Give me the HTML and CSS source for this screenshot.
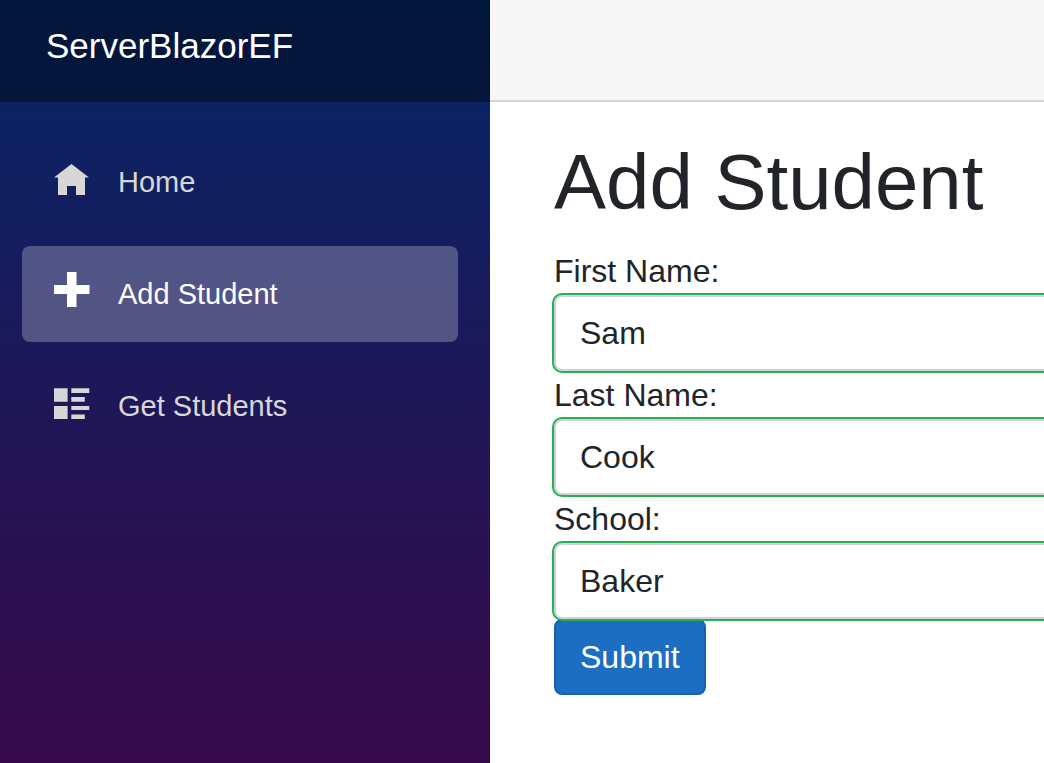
FILE: index.html
```html
<!DOCTYPE html>
<html lang="en">
<head>
<meta charset="utf-8">
<meta name="viewport" content="width=device-width, initial-scale=1">
<title>ServerBlazorEF</title>
<link rel="stylesheet" href="styles.css">
</head>
<body>
<div class="page">
  <aside class="sidebar">
    <div class="brand-bar"><a class="brand" href="#">ServerBlazorEF</a></div>
    <nav class="nav">
      <a class="nav-link" href="#">
        <svg class="icon" viewBox="0 0 36 36" aria-hidden="true"><path d="M17.5 0 0 13.5h4V31h9v-9h9v9h9V13.5h4z"/></svg>
        <span>Home</span>
      </a>
      <a class="nav-link active" href="#" aria-current="page">
        <svg class="icon" viewBox="0 0 36 36" aria-hidden="true"><path d="M13 -4h9.500v13h13v9h-13v13H13V18H0V9h13z"/></svg>
        <span>Add Student</span>
      </a>
      <a class="nav-link" href="#">
        <svg class="icon" viewBox="0 0 36 36" aria-hidden="true"><path d="M0 .3h13.600v13.400H0zM0 18h13.600v13H0zM17.300 .3h18v4.700h-18zM17.300 9h13.500v4.700H17.300zM17.300 18h18v4h-18zM17.300 26.400h13.500V31H17.300z"/></svg>
        <span>Get Students</span>
      </a>
    </nav>
  </aside>
  <main class="main">
    <div class="top-row"></div>
    <div class="content">
      <h1 class="title">Add Student</h1>
      <form class="form">
        <label class="label" for="first">First Name:</label>
        <input class="field" id="first" type="text" value="Sam">
        <label class="label" for="last">Last Name:</label>
        <input class="field" id="last" type="text" value="Cook">
        <label class="label" for="school">School:</label>
        <input class="field" id="school" type="text" value="Baker">
        <button class="submit" type="button">Submit</button>
      </form>
    </div>
  </main>
</div>
</body>
</html>
```
FILE: styles.css
```css
* { box-sizing: border-box; }

body {
  margin: 0;
  background: #fff;
  color: #212529;
  font-family: "Liberation Sans", Arial, sans-serif;
  font-size: 32px;
  line-height: 48px;
}

.page {
  display: flex;
  min-height: 100vh;
  overflow: hidden;
}

.sidebar {
  flex: 0 0 490px;
  background: linear-gradient(180deg, #052767 0%, #3a0647 108%);
}

.brand-bar {
  display: flex;
  align-items: center;
  height: 102px;
  padding: 0 46px 10px;
  background: rgba(0, 0, 0, 0.4);
}

.brand {
  color: #fff;
  font-size: 35px;
  text-decoration: none;
}

.nav {
  display: flex;
  flex-direction: column;
  gap: 16px;
  padding: 32px 32px 0 22px;
}

.nav-link {
  display: flex;
  align-items: center;
  gap: 28px;
  height: 96px;
  padding: 0 32px;
  border-radius: 8px;
  color: #d7d7d7;
  font-size: 29px;
  text-decoration: none;
}

.nav-link.active {
  background: rgba(255, 255, 255, 0.25);
  color: #fff;
}

.icon {
  width: 36px;
  height: 36px;
  overflow: visible;
  fill: currentColor;
}

.main {
  flex: 1;
  min-width: 0;
}

.top-row {
  height: 102px;
  background: #f7f7f7;
  border-bottom: 2px solid #d6d5d5;
}

.content { padding: 32px 0 0 64px; }

.title {
  margin: 0 0 17px;
  font-size: 78px;
  font-weight: 400;
  line-height: 96px;
}

/* The fields run on past the right edge of the window. */
.form {
  display: flex;
  flex-direction: column;
  margin-right: -32px;
}

/* Stacked above the button so the valid outline stays whole. */
.field {
  z-index: 1;
  height: 76px;
  padding: 12px 24px;
  border: 2px solid #ced4da;
  border-radius: 8px;
  outline: 2px solid #26b050;
  background: #fff;
  color: #212529;
  font: inherit;
}

.submit {
  align-self: flex-start;
  height: 76px;
  padding: 12px 24px;
  border: 2px solid #1861ac;
  border-radius: 8px;
  background: #1b6ec2;
  color: #fff;
  font: inherit;
}
```
